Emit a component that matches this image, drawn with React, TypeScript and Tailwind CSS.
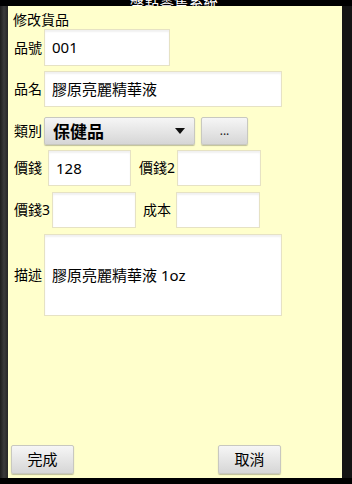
const font = { fontFamily: '"Noto Sans", "Noto Sans CJK TC", sans-serif' };

function Field({ w, value }: { w: string; value?: string }) {
  return (
    <div className={`${w} flex h-[36px] items-center border border-[#e6e2c4] bg-white pl-[7px] text-[15px] text-black shadow-[inset_0_2px_2px_rgba(0,0,0,0.06)]`}>
      {value}
    </div>
  );
}

function Label({ text, w }: { text: string; w: string }) {
  return <span className={`${w} shrink-0 text-[14px] leading-none text-black`}>{text}</span>;
}

function GrayButton({ children, className }: { children: React.ReactNode; className: string }) {
  return (
    <div className={`flex items-center justify-center rounded-[2px] border border-[#c8c8c0] bg-gradient-to-b from-[#f6f6f6] to-[#d6d6d6] shadow-[0_1px_1px_rgba(0,0,0,0.25)] ${className}`}>
      {children}
    </div>
  );
}

export default function App() {
  return (
    <div style={font} className="flex h-[484px] w-[352px] flex-col bg-black">
      <div className="relative h-[6px] shrink-0 overflow-hidden">
        <span className="absolute bottom-[-3px] left-[130px] text-[14.5px] leading-none tracking-[0.2px] text-white">盤點零售系統</span>
      </div>
      <div className="flex min-h-0 flex-1">
        <div className="w-[8px] shrink-0 bg-gradient-to-r from-[#1c1c1c] via-[#3a3a3a] to-[#262626]" />
        <div className="flex flex-1 flex-col bg-[#ffffcc] pb-[4px]">
          <div className="pl-[5px] pt-[5px] text-[14px] leading-[17px] text-black">修改貨品</div>

          <div className="mt-[1px] flex items-center pl-[6px]">
            <Label text="品號" w="w-[30px]" />
            <Field w="w-[126px] h-[37px]" value="001" />
          </div>

          <div className="mt-[5px] flex items-center pl-[6px]">
            <Label text="品名" w="w-[30px]" />
            <Field w="w-[238px]" value="膠原亮麗精華液" />
          </div>

          <div className="mt-[10px] flex items-center pl-[6px]">
            <Label text="類別" w="w-[30px]" />
            <GrayButton className="h-[28px] w-[151px] !justify-between pl-[8px] pr-[9px]">
              <span className="text-[17px] font-bold leading-none text-black">保健品</span>
              <svg width="10" height="6" viewBox="0 0 10 6"><path d="M0 0h10L5 6z" fill="#111" /></svg>
            </GrayButton>
            <GrayButton className="ml-[6px] h-[28px] w-[47px]">
              <span className="text-[12px] leading-none text-[#222]">...</span>
            </GrayButton>
          </div>

          <div className="mt-[5px] flex items-center pl-[6px]">
            <Label text="價錢" w="w-[34px]" />
            <Field w="w-[83px]" value="128" />
            <span className="ml-[8px] w-[38px] shrink-0 text-[14px] leading-none">價錢2</span>
            <Field w="w-[84px]" />
          </div>

          <div className="mt-[6px] flex items-center pl-[6px]">
            <Label text="價錢3" w="w-[38px]" />
            <Field w="w-[84px]" />
            <span className="ml-[7px] w-[33px] shrink-0 text-[14px] leading-none">成本</span>
            <Field w="w-[84px]" />
          </div>

          <div className="mt-[6px] flex items-center pl-[6px]">
            <Label text="描述" w="w-[30px]" />
            <Field w="w-[238px] !h-[82px]" value="膠原亮麗精華液 1oz" />
          </div>

          <div className="mt-auto flex justify-between pl-[3px] pr-[61px]">
            <GrayButton className="h-[29px] w-[63px]">
              <span className="text-[15px] leading-none text-black">完成</span>
            </GrayButton>
            <GrayButton className="h-[29px] w-[63px]">
              <span className="text-[15px] leading-none text-black">取消</span>
            </GrayButton>
          </div>
        </div>
        <div className="w-[10px] shrink-0 bg-[#141414]" />
      </div>
      <div className="h-[6px] shrink-0" />
    </div>
  );
}
